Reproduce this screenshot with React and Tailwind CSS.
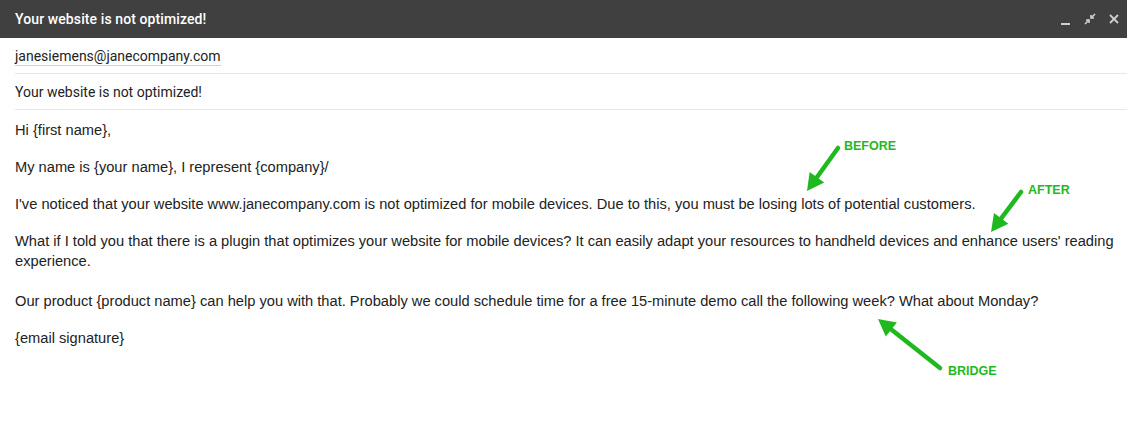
import React from 'react';

function Arrow({ x1, y1, x2, y2 }) {
  const ang = Math.atan2(y2 - y1, x2 - x1);
  const L = 17;
  const W = 9;
  const bx = x2 - L * Math.cos(ang);
  const by = y2 - L * Math.sin(ang);
  const px = -Math.sin(ang) * W;
  const py = Math.cos(ang) * W;
  return (
    <g>
      <line x1={x1} y1={y1} x2={bx} y2={by} stroke="#1fb91f" strokeWidth="4.5" strokeLinecap="round" />
      <polygon points={`${x2},${y2} ${bx + px},${by + py} ${bx - px},${by - py}`} fill="#1fb91f" />
    </g>
  );
}

export default function App() {
  return (
    <div className="relative w-[1127px] h-[424px] bg-white overflow-hidden" style={{ fontFamily: 'Roboto, Arial, sans-serif' }}>
      <div className="h-[38px] bg-[#404040] flex items-center justify-between pl-[15px] pr-[6px]">
        <span className="text-white text-[14px] font-medium tracking-[0.1px]">Your website is not optimized!</span>
        <div className="flex items-center gap-[10px]">
          <svg width="14" height="14" viewBox="0 0 14 14"><rect x="2" y="11" width="9" height="2" fill="#cfcfcf" /></svg>
          <svg width="14" height="14" viewBox="0 0 14 14" stroke="#cfcfcf" strokeWidth="1.6" fill="none">
            <line x1="2" y1="12" x2="6" y2="8" />
            <polyline points="3,8 6,8 6,11" />
            <line x1="12" y1="2" x2="8" y2="6" />
            <polyline points="8,3 8,6 11,6" />
          </svg>
          <svg width="14" height="14" viewBox="0 0 14 14" stroke="#cfcfcf" strokeWidth="1.8">
            <line x1="3" y1="3" x2="11" y2="11" />
            <line x1="11" y1="3" x2="3" y2="11" />
          </svg>
        </div>
      </div>

      <div className="pl-[15px]">
        <div className="h-[36px] flex items-end pb-[7px] border-b border-[#e8e8e8]">
          <span className="text-[14px] text-[#222] border-b border-[#f3d36b] leading-[17px]">janesiemens@janecompany.com</span>
        </div>
        <div className="h-[36px] flex items-center pt-[1px] border-b border-[#e8e8e8] text-[14px] text-[#222]">
          Your website is not optimized!
        </div>
      </div>

      <div className="pl-[15px] pr-[6px] pt-[10px] text-[14.66px] leading-[20px] text-[#222] flex flex-col gap-[17px]" style={{ fontFamily: '"Liberation Sans", Arial, sans-serif' }}>
        <p>Hi {'{first name}'},</p>
        <p>My name is {'{your name}'}, I represent {'{company}'}/</p>
        <p>I've noticed that your website www.janecompany.com is not optimized for mobile devices. Due to this, you must be losing lots of potential customers.</p>
        <p>What if I told you that there is a plugin that optimizes your website for mobile devices? It can easily adapt your resources to handheld devices and enhance users' reading experience.</p>
        <p className="mt-[3px]">Our product {'{product name}'} can help you with that. Probably we could schedule time for a free 15-minute demo call the following week? What about Monday?</p>
        <p>{'{email signature}'}</p>
      </div>

      <svg className="absolute left-0 top-0 pointer-events-none" width="1127" height="424">
        <Arrow x1={838} y1={148} x2={807} y2={191} />
        <Arrow x1={1021} y1={192} x2={991} y2={232} />
        <Arrow x1={940} y1={368} x2={878} y2={319} />
      </svg>
      <span className="absolute left-[844px] top-[137px] text-[12.5px] font-bold text-[#1fb91f]" style={{ fontFamily: '"Liberation Sans", Arial, sans-serif' }}>BEFORE</span>
      <span className="absolute left-[1028px] top-[181px] text-[12.5px] font-bold text-[#1fb91f]" style={{ fontFamily: '"Liberation Sans", Arial, sans-serif' }}>AFTER</span>
      <span className="absolute left-[948px] top-[362px] text-[12.5px] font-bold text-[#1fb91f]" style={{ fontFamily: '"Liberation Sans", Arial, sans-serif' }}>BRIDGE</span>
    </div>
  );
}
